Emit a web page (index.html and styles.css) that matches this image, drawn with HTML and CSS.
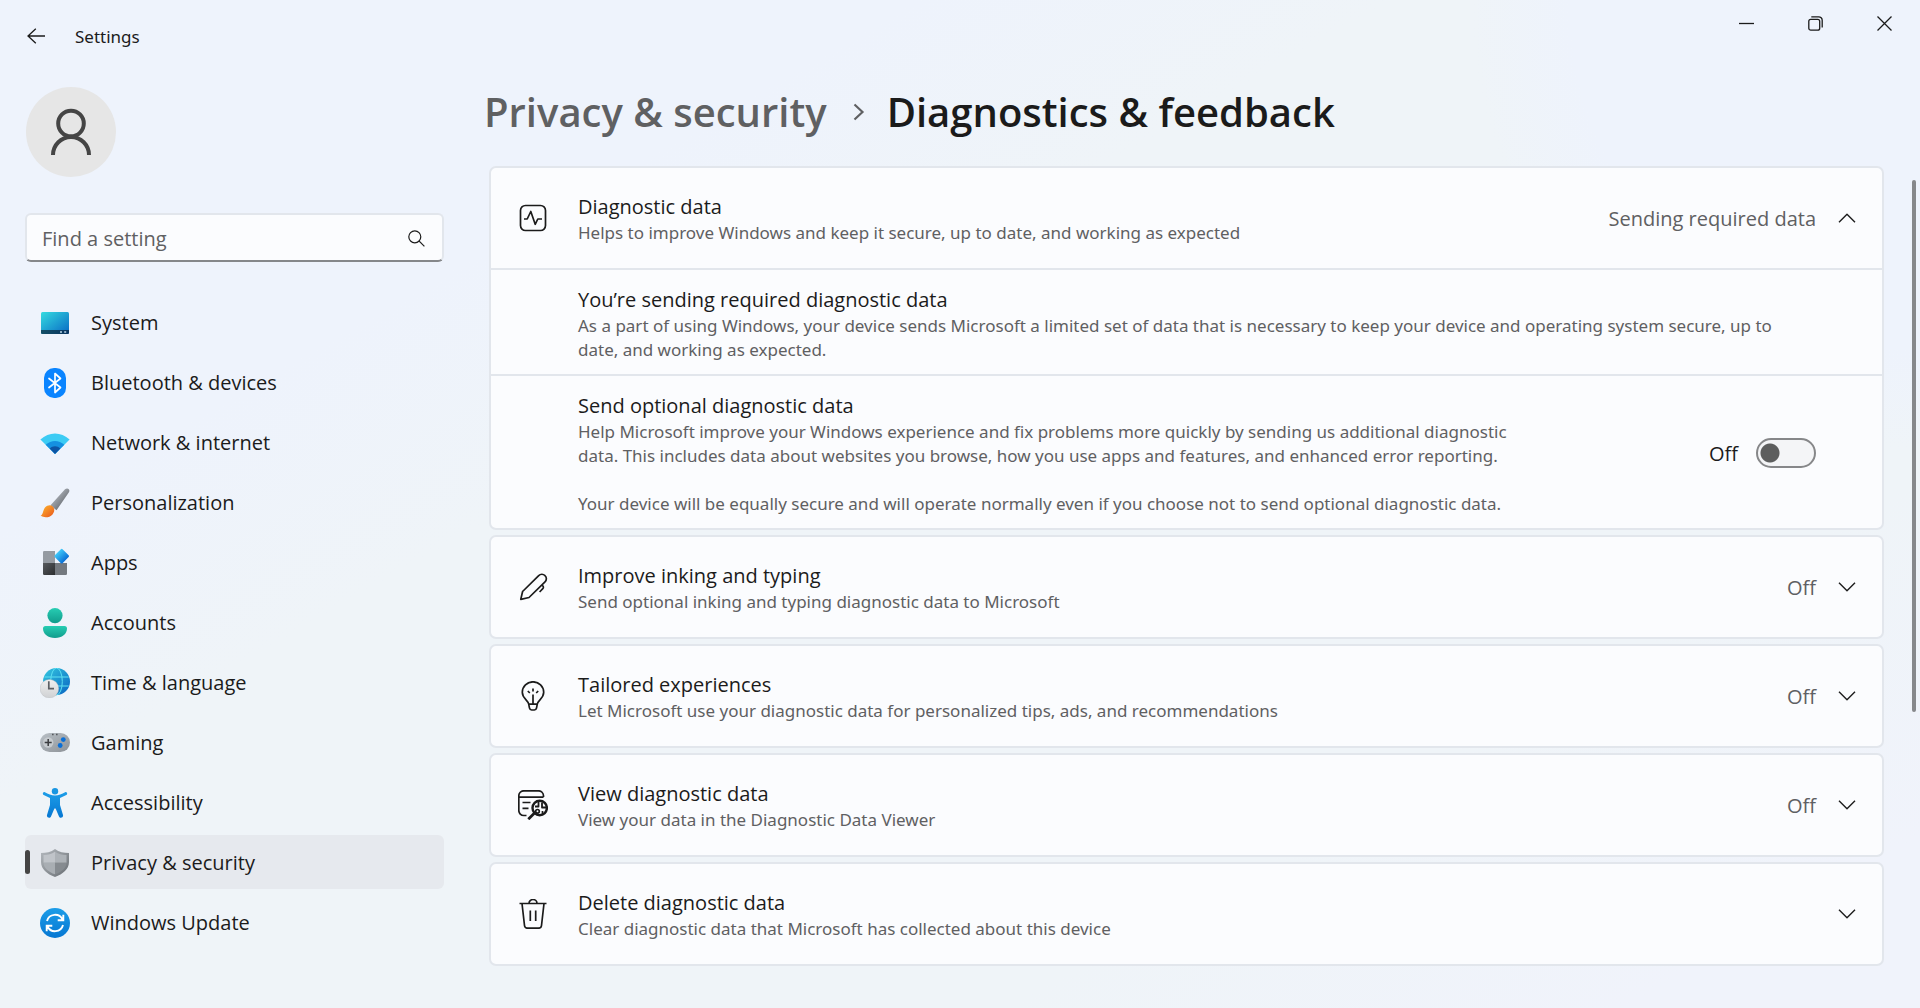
FILE: index.html
```html
<!DOCTYPE html>
<html lang="en">
<head>
    <meta charset="UTF-8">
    <meta name="viewport" content="width=device-width, initial-scale=1.0">
    <title>Settings</title>
    <link rel="stylesheet" href="styles.css">
</head>
<body>
<header class="titlebar">
    <button class="back-btn" aria-label="Back">
        <svg width="18" height="16" viewBox="0 0 18 16"><path d="M8.800.7 1 8l7.800 7.300M1 8h17"/></svg>
    </button>
    <span class="app-name">Settings</span>
    <div class="window-btns">
        <button class="window-btn" aria-label="Minimize">
            <svg width="15" height="15" viewBox="0 0 15 15"><path d="M0 7.500h15"/></svg>
        </button>
        <button class="window-btn" aria-label="Restore">
            <svg width="15" height="15" viewBox="0 0 15 15"><rect x=".8" y="3.300" width="10.900" height="10.900" rx="2"/><path d="M3.300.8h7.400a3.500 3.500 0 0 1 3.500 3.500v7.200"/></svg>
        </button>
        <button class="window-btn" aria-label="Close">
            <svg width="15" height="15" viewBox="0 0 15 15"><path d="M.5.5l14 14M14.500.5l-14 14"/></svg>
        </button>
    </div>
</header>

<div class="layout">
    <aside class="sidebar">
        <div class="avatar">
            <svg width="42" height="48" viewBox="0 0 42 48"><circle cx="21" cy="15.500" r="12.800"/><path d="M3 47a18 18 0 0 1 36 0"/></svg>
        </div>

        <label class="search">
            <input type="text" placeholder="Find a setting" aria-label="Find a setting">
            <svg width="17" height="17" viewBox="0 0 17 17"><circle cx="6.800" cy="6.800" r="6"/><path d="M11.200 11.200l5.200 5.200"/></svg>
        </label>

        <nav class="nav">
            <a class="nav-item" href="#system">
                <svg class="nav-icon" viewBox="0 0 30 30">
                    <defs>
                        <linearGradient id="g-screen" x1="0" y1="0" x2="1" y2="1"><stop offset="0" stop-color="#35dbe0"/><stop offset="1" stop-color="#0868c4"/></linearGradient>
                        <linearGradient id="g-bar" x1="0" y1="0" x2="1" y2="0"><stop offset="0" stop-color="#134e66"/><stop offset="1" stop-color="#0a3560"/></linearGradient>
                    </defs>
                    <rect x="1" y="4" width="28" height="22" rx="1.500" fill="url(#g-screen)"/>
                    <path d="M1 22h28v2.500a1.500 1.500 0 0 1-1.500 1.500h-25A1.500 1.500 0 0 1 1 24.500z" fill="url(#g-bar)"/>
                    <path d="M20 23.200h2v1.600h-2zM24.200 23.200h2v1.600h-2z" fill="#b9d3e6"/>
                </svg>
                System
            </a>
            <a class="nav-item" href="#bluetooth">
                <svg class="nav-icon" viewBox="0 0 30 30">
                    <rect x="4" width="22" height="30" rx="10" fill="#0a84ff"/>
                    <path d="M9 10.500l11.500 9L15 24.500v-19l5.500 5L9 19.500" fill="none" stroke="#fff" stroke-width="1.700" stroke-linejoin="round" stroke-linecap="round"/>
                </svg>
                Bluetooth &amp; devices
            </a>
            <a class="nav-item" href="#network">
                <svg class="nav-icon" viewBox="0 0 30 30">
                    <path d="M.4 11.600C9 3.300 21 3.300 29.600 11.600L15 26z" fill="#3ccbf4"/>
                    <path d="M5.700 16.800c5.400-5.200 13.200-5.200 18.600 0L15 26z" fill="#1590e0"/>
                    <path d="M9.700 20.600c3.200-3.200 7.400-3.200 10.600 0L15 26z" fill="#0d54a4"/>
                </svg>
                Network &amp; internet
            </a>
            <a class="nav-item" href="#personalization">
                <svg class="nav-icon" viewBox="0 0 30 30">
                    <defs>
                        <linearGradient id="g-handle" x1="0" y1="0" x2="1" y2="1"><stop offset=".2" stop-color="#b4bac1"/><stop offset=".8" stop-color="#64686e"/></linearGradient>
                        <linearGradient id="g-brush" x1="0" y1="0" x2="1" y2="1"><stop offset="0" stop-color="#ffb92e"/><stop offset="1" stop-color="#e8541c"/></linearGradient>
                    </defs>
                    <path d="M25 1.300c1.300-1.100 3-1 3.800 0 .8.900.8 2.200-.2 3.500L16.500 22.300l-6-5z" fill="url(#g-handle)"/>
                    <path d="M5 19.600c2.300-2.600 5.600-3 7.700-1.200 2.200 2 2 5.500-.2 8C9.500 29.700 4 30.200.6 27.600c2.700-.9 2.200-5.500 4.400-8z" fill="url(#g-brush)"/>
                </svg>
                Personalization
            </a>
            <a class="nav-item" href="#apps">
                <svg class="nav-icon" viewBox="0 0 30 30">
                    <defs>
                        <linearGradient id="g-dia" x1="0" y1="0" x2="1" y2="0"><stop offset="0" stop-color="#3fc8f8"/><stop offset="1" stop-color="#0a6fd6"/></linearGradient>
                        <linearGradient id="g-dark" x1="0" y1="0" x2="1" y2="1"><stop offset="0" stop-color="#56595d"/><stop offset="1" stop-color="#2c2e30"/></linearGradient>
                    </defs>
                    <path d="M4.200 3H15v12H3V4.200A1.200 1.200 0 0 1 4.200 3z" fill="#959ba2"/>
                    <path d="M3 15h12v12H4.200A1.200 1.200 0 0 1 3 25.800z" fill="url(#g-dark)"/>
                    <path d="M15 15h12v10.800a1.200 1.200 0 0 1-1.200 1.200H15z" fill="#74797f"/>
                    <rect x="16.200" y="2.700" width="11" height="11" rx="1.200" transform="rotate(45 21.700 8.200)" fill="url(#g-dia)"/>
                </svg>
                Apps
            </a>
            <a class="nav-item" href="#accounts">
                <svg class="nav-icon" viewBox="0 0 30 30">
                    <defs>
                        <linearGradient id="g-acc" x1="0" y1="0" x2="0" y2="1"><stop offset="0" stop-color="#27cdb3"/><stop offset="1" stop-color="#119c8c"/></linearGradient>
                    </defs>
                    <circle cx="15" cy="7.600" r="7.600" fill="url(#g-acc)"/>
                    <path d="M5.500 18h19a2.500 2.500 0 0 1 2.500 2.500C27 26 22 30 15 30S3 26 3 20.500A2.500 2.500 0 0 1 5.500 18z" fill="url(#g-acc)"/>
                </svg>
                Accounts
            </a>
            <a class="nav-item" href="#time">
                <svg class="nav-icon" viewBox="0 0 30 30">
                    <defs>
                        <linearGradient id="g-globe" x1="0" y1="0" x2="1" y2="1"><stop offset="0" stop-color="#35c9e0"/><stop offset="1" stop-color="#0763c2"/></linearGradient>
                        <linearGradient id="g-clock" x1="0" y1="0" x2="0" y2="1"><stop offset="0" stop-color="#f0f0f0"/><stop offset="1" stop-color="#cfd1d3"/></linearGradient>
                    </defs>
                    <circle cx="16.500" cy="13.500" r="13.500" fill="url(#g-globe)"/>
                    <g fill="none" stroke="#5ee0f2" stroke-width="1"><ellipse cx="16.500" cy="13.500" rx="5.800" ry="13.500"/><path d="M4.500 9h24.200M4.500 18h24.200"/></g>
                    <circle cx="9.400" cy="20.700" r="9.300" fill="url(#g-clock)" stroke="#b5b8bb" stroke-width=".4"/>
                    <path d="M8.800 13.200v7.400H14" fill="none" stroke="#5c5f63" stroke-width="1.700"/>
                </svg>
                Time &amp; language
            </a>
            <a class="nav-item" href="#gaming">
                <svg class="nav-icon" viewBox="0 0 30 30">
                    <defs>
                        <linearGradient id="g-pad" x1="0" y1="0" x2="1" y2="1"><stop offset="0" stop-color="#b9c0c6"/><stop offset="1" stop-color="#8d9297"/></linearGradient>
                    </defs>
                    <rect y="5" width="30" height="19" rx="9.500" fill="url(#g-pad)"/>
                    <circle cx="8.200" cy="14.500" r="5.200" fill="#c6cbcf"/>
                    <path d="M8.200 11v7M4.700 14.500h7" stroke="#3b3d40" stroke-width="1.500"/>
                    <path d="M12 6.500h1.600M16 6.500h1.600" stroke="#55585c" stroke-width="1.300"/>
                    <circle cx="23.300" cy="11.600" r="2.400" fill="#0a6fd6"/>
                    <circle cx="20.200" cy="17.500" r="2.400" fill="#0a6fd6"/>
                </svg>
                Gaming
            </a>
            <a class="nav-item" href="#accessibility">
                <svg class="nav-icon" viewBox="0 0 30 30">
                    <defs>
                        <linearGradient id="g-man" x1="0" y1="0" x2="0" y2="1"><stop offset="0" stop-color="#1c9de8"/><stop offset="1" stop-color="#0677d2"/></linearGradient>
                    </defs>
                    <circle cx="15" cy="3.200" r="3.200" fill="#1896e2"/>
                    <path d="M4.900 4.200C8 5.800 11.500 7.400 15 7.400s7-1.600 10.100-3.200c1.900-.8 2.900 2 1.200 2.900L20 10v7l3 10c.6 2.700-3 4-4 1.500L15.600 20.500h-1.200L11 28.500c-1 2.500-4.600 1.200-4-1.500l3-10v-7L3.700 7.100c-1.700-.9-.7-3.700 1.200-2.900z" fill="url(#g-man)"/>
                </svg>
                Accessibility
            </a>
            <a class="nav-item active" href="#privacy" aria-current="page">
                <svg class="nav-icon" viewBox="0 0 30 30">
                    <defs>
                        <linearGradient id="g-shield" x1="0" y1="0" x2="1" y2="1"><stop offset="0" stop-color="#b4b9be"/><stop offset="1" stop-color="#686d72"/></linearGradient>
                    </defs>
                    <path d="M15 1c4 3 9 4 14 4v9c0 7-6 12-14 15C7 26 1 21 1 14V5c5 0 10-1 14-4z" fill="url(#g-shield)"/>
                    <path d="M15 3.700v11H3.500V7c4.200 0 8-1 11.500-3.300z" fill="#c0c4c9"/>
                    <path d="M15 3.700v11h11.500V7C22.300 7 18.500 6 15 3.700z" fill="#adb2b7"/>
                    <path d="M3.500 14.700H15v11.600C8.500 24 3.700 20 3.500 14.700z" fill="#a9aeb3"/>
                    <path d="M26.500 14.700H15v11.600c6.500-2.300 11.300-6.300 11.500-11.600z" fill="#868b90"/>
                </svg>
                Privacy &amp; security
            </a>
            <a class="nav-item" href="#update">
                <svg class="nav-icon" viewBox="0 0 30 30">
                    <circle cx="15" cy="15" r="15" fill="url(#g-man)"/>
                    <g fill="none" stroke="#fff" stroke-width="1.900">
                        <path d="M7 13a8.300 8.300 0 0 1 15.500-1.500M23.300 6.800v5.500h-5.600"/>
                        <path d="M23 17a8.300 8.300 0 0 1-15.500 1.500M6.700 23.200v-5.500h5.600"/>
                    </g>
                </svg>
                Windows Update
            </a>
        </nav>
    </aside>

    <main class="content">
        <h1 class="breadcrumb">
            <a href="#privacy">Privacy &amp; security</a>
            <svg width="12" height="18" viewBox="0 0 12 18"><path d="M1.500 1.500 9.500 9l-8 7.500"/></svg>
            <span>Diagnostics &amp; feedback</span>
        </h1>

        <div class="cards">
            <section class="card">
                <button class="row" aria-expanded="true">
                    <svg class="row-icon" viewBox="0 0 30 30"><rect x="2.500" y="2.500" width="25" height="25" rx="5"/><path d="M6 16h3.200L12.800 8.500l4.400 12.800 2.600-5.300H24"/></svg>
                    <span class="text">
                        <span class="title">Diagnostic data</span>
                        <span class="desc">Helps to improve Windows and keep it secure, up to date, and working as expected</span>
                    </span>
                    <span class="status">Sending required data</span>
                    <svg class="chevron" viewBox="0 0 18 10"><path d="M1 9.200 9 1.200l8 8"/></svg>
                </button>
                <div class="row sub">
                    <div class="text">
                        <span class="title">You’re sending required diagnostic data</span>
                        <span class="desc">As a part of using Windows, your device sends Microsoft a limited set of data that is necessary to keep your device and operating system secure, up to date, and working as expected.</span>
                    </div>
                </div>
                <div class="row sub">
                    <div class="text narrow">
                        <label class="title" for="optional-data">Send optional diagnostic data</label>
                        <span class="desc">Help Microsoft improve your Windows experience and fix problems more quickly by sending us additional diagnostic data. This includes data about websites you browse, how you use apps and features, and enhanced error reporting.<br><br>Your device will be equally secure and will operate normally even if you choose not to send optional diagnostic data.</span>
                    </div>
                    <span class="toggle-label">Off</span>
                    <input class="toggle" type="checkbox" role="switch" id="optional-data">
                </div>
            </section>

            <section class="card">
                <button class="row" aria-expanded="false">
                    <svg class="row-icon" viewBox="0 0 30 30"><path d="M2.800 27.300 4.600 19.500 20.700 3.600a4.400 4.400 0 0 1 6.300 0 4.200 4.200 0 0 1 0 6.200L11 25.500zM23.800 13l1 .9a1.900 1.900 0 0 1 0 2.800L21.600 20"/></svg>
                    <span class="text">
                        <span class="title">Improve inking and typing</span>
                        <span class="desc">Send optional inking and typing diagnostic data to Microsoft</span>
                    </span>
                    <span class="status">Off</span>
                    <svg class="chevron" viewBox="0 0 18 10"><path d="M1 .8l8 8 8-8"/></svg>
                </button>
            </section>

            <section class="card">
                <button class="row" aria-expanded="false">
                    <svg class="row-icon" viewBox="0 0 30 30"><path d="M10.700 23.200C10 18.800 4.300 17.500 4.300 11.300a10.700 10.500 0 0 1 21.400 0c0 6.200-5.700 7.500-6.400 11.900zM10.700 23.200l.8 4a2.200 2.200 0 0 0 2.200 1.800h2.600a2.200 2.200 0 0 0 2.200-1.800l.8-4M15 13.500V23M15 7.600v2.800M9.800 10l2 2M20.200 10l-2 2"/></svg>
                    <span class="text">
                        <span class="title">Tailored experiences</span>
                        <span class="desc">Let Microsoft use your diagnostic data for personalized tips, ads, and recommendations</span>
                    </span>
                    <span class="status">Off</span>
                    <svg class="chevron" viewBox="0 0 18 10"><path d="M1 .8l8 8 8-8"/></svg>
                </button>
            </section>

            <section class="card">
                <button class="row" aria-expanded="false">
                    <svg class="row-icon" viewBox="0 0 30 30">
                        <path d="M8.500 25.500H5.800a5 5 0 0 1-5-5V5.800a5 5 0 0 1 5-5h14.700a5 5 0 0 1 5 5V7M.8 7.200h24.700M4.500 12.500h8M4.500 18.300h6"/>
                        <circle cx="21.700" cy="18" r="7.200" stroke-width="2.400"/>
                        <path d="M16.300 23.200l-6 6" stroke-width="2.800"/>
                        <path d="M20.500 12v4.500h-3.500M24 12.500v5h4" stroke-width="1.800"/>
                        <circle cx="19.500" cy="21.300" r="1.800"/>
                        <path d="M24.500 24.500v-3.500"/>
                    </svg>
                    <span class="text">
                        <span class="title">View diagnostic data</span>
                        <span class="desc">View your data in the Diagnostic Data Viewer</span>
                    </span>
                    <span class="status">Off</span>
                    <svg class="chevron" viewBox="0 0 18 10"><path d="M1 .8l8 8 8-8"/></svg>
                </button>
            </section>

            <section class="card">
                <button class="row" aria-expanded="false">
                    <svg class="row-icon" viewBox="0 0 30 30"><path d="M1.500 4.500h27M11 4.500a4 4 0 0 1 8 0M4 4.500l2.500 22a3 3 0 0 0 3 2.700h11a3 3 0 0 0 3-2.700L26 4.500M12.300 11.500v10.500M17.700 11.500v10.500"/></svg>
                    <span class="text">
                        <span class="title">Delete diagnostic data</span>
                        <span class="desc">Clear diagnostic data that Microsoft has collected about this device</span>
                    </span>
                    <svg class="chevron" viewBox="0 0 18 10"><path d="M1 .8l8 8 8-8"/></svg>
                </button>
            </section>
        </div>
        <div class="scroll-thumb"></div>
    </main>
</div>
</body>
</html>
```
FILE: styles.css
```css
* {
    box-sizing: border-box;
}
body {
    margin: 0;
    min-height: 100vh;
    font-family: "Open Sans", "Noto Sans", sans-serif;
    font-size: 20px;
    color: #1b1b1b;
    background:
        radial-gradient(circle at 100% 0, #eef3fc 350px, transparent 450px),
        linear-gradient(150deg, #eef3fc 25%, #eff4f8 38%, #eff4f8 75%, #f0f3fb 92%);
}
button {
    font: inherit;
    color: inherit;
    background: none;
    border: 0;
    padding: 0;
}
a {
    color: inherit;
    text-decoration: none;
}
svg {
    flex: none;
}

.titlebar {
    display: flex;
    align-items: center;
    height: 72px;
    padding: 0 1px 0 27px;
}
.back-btn {
    display: flex;
    margin-right: 30px;
}
.back-btn svg, .window-btn svg {
    fill: none;
    stroke: #1b1b1b;
    stroke-width: 1.3;
}
.app-name {
    font-family: "Noto Sans", sans-serif;
    font-size: 17px;
}
.window-btns {
    display: flex;
    align-self: flex-start;
    margin-left: auto;
}
.window-btn {
    display: flex;
    align-items: center;
    justify-content: center;
    width: 69px;
    height: 47px;
}

.layout {
    display: flex;
}
.sidebar {
    flex: none;
    width: 444px;
    padding: 15px 0 0 25px;
}
.avatar {
    display: flex;
    align-items: center;
    justify-content: center;
    width: 90px;
    height: 90px;
    margin-left: 1px;
    border-radius: 50%;
    background: #e6e6e6;
}
.avatar svg {
    fill: none;
    stroke: #454545;
    stroke-width: 4;
}
.search {
    display: flex;
    align-items: center;
    height: 49px;
    margin: 36px 0 33px;
    padding: 1px 17px 0 15px;
    background: #fbfcfe;
    border: 2px solid #e2e6ec;
    border-bottom-color: #85878a;
    border-radius: 6px;
}
.search input {
    flex: 1;
    min-width: 0;
    padding: 0;
    font: inherit;
    color: inherit;
    background: none;
    border: 0;
    outline: none;
}
.search input::placeholder {
    color: #5f6062;
    opacity: 1;
}
.search svg {
    fill: none;
    stroke: #1b1b1b;
    stroke-width: 1.2;
}

.nav {
    display: flex;
    flex-direction: column;
    gap: 6px;
}
.nav-item {
    position: relative;
    display: flex;
    align-items: center;
    gap: 21px;
    height: 54px;
    padding: 1px 0 0 15px;
    border-radius: 6px;
}
.nav-item.active {
    background: #e6e9ee;
}
.nav-item.active::before {
    content: "";
    position: absolute;
    left: 0;
    top: 15px;
    width: 5px;
    height: 24px;
    border-radius: 3px;
    background: #454545;
}
.nav-icon {
    width: 30px;
    height: 30px;
}

.content {
    position: relative;
    flex: 1;
    min-width: 0;
    padding: 12px 36px 40px 45px;
}
.breadcrumb {
    display: flex;
    align-items: center;
    margin: 0 0 26px -5px;
    font-size: 40px;
    font-weight: 600;
    line-height: 56px;
}
.breadcrumb a {
    color: #5f6062;
}
.breadcrumb svg {
    margin: 0 22px 0 26px;
    fill: none;
    stroke: #5f6062;
    stroke-width: 2.2;
}

.cards {
    display: flex;
    flex-direction: column;
    gap: 5px;
}
.card {
    background: #fbfcfe;
    border: 2px solid #e2e6ec;
    border-radius: 7px;
}
.row {
    display: flex;
    align-items: center;
    width: 100%;
    min-height: 100px;
    padding: 12px 26px 12px 27px;
    text-align: left;
}
.row.sub {
    padding: 14px 66px 12px 87px;
    border-top: 2px solid #e2e6ec;
}
.row-icon {
    width: 30px;
    height: 30px;
    margin-right: 30px;
}
.row-icon, .chevron {
    fill: none;
    stroke: #1b1b1b;
    stroke-width: 1.7;
    stroke-linejoin: round;
}
.text {
    display: flex;
    flex: 1;
    flex-direction: column;
    padding-top: 2px;
}
.narrow {
    max-width: 970px;
}
.title {
    line-height: 28px;
}
.desc {
    font-family: "Noto Sans", sans-serif;
    font-size: 17px;
    line-height: 24px;
    color: #5f6062;
}
.status {
    color: #5f6062;
}
.chevron {
    width: 18px;
    height: 10px;
    margin-left: 22px;
    stroke-width: 1.4;
}
.toggle-label {
    margin-left: auto;
}
.toggle {
    appearance: none;
    width: 60px;
    height: 30px;
    margin: 0 0 0 18px;
    border: 2px solid #868789;
    border-radius: 15px;
    background: radial-gradient(circle at 12px 13px, #5d5e5e 9px, #f4f5f7 10px);
}
.scroll-thumb {
    position: absolute;
    top: 108px;
    right: 4px;
    width: 4px;
    height: 532px;
    border-radius: 2px;
    background: #86888b;
}
```
